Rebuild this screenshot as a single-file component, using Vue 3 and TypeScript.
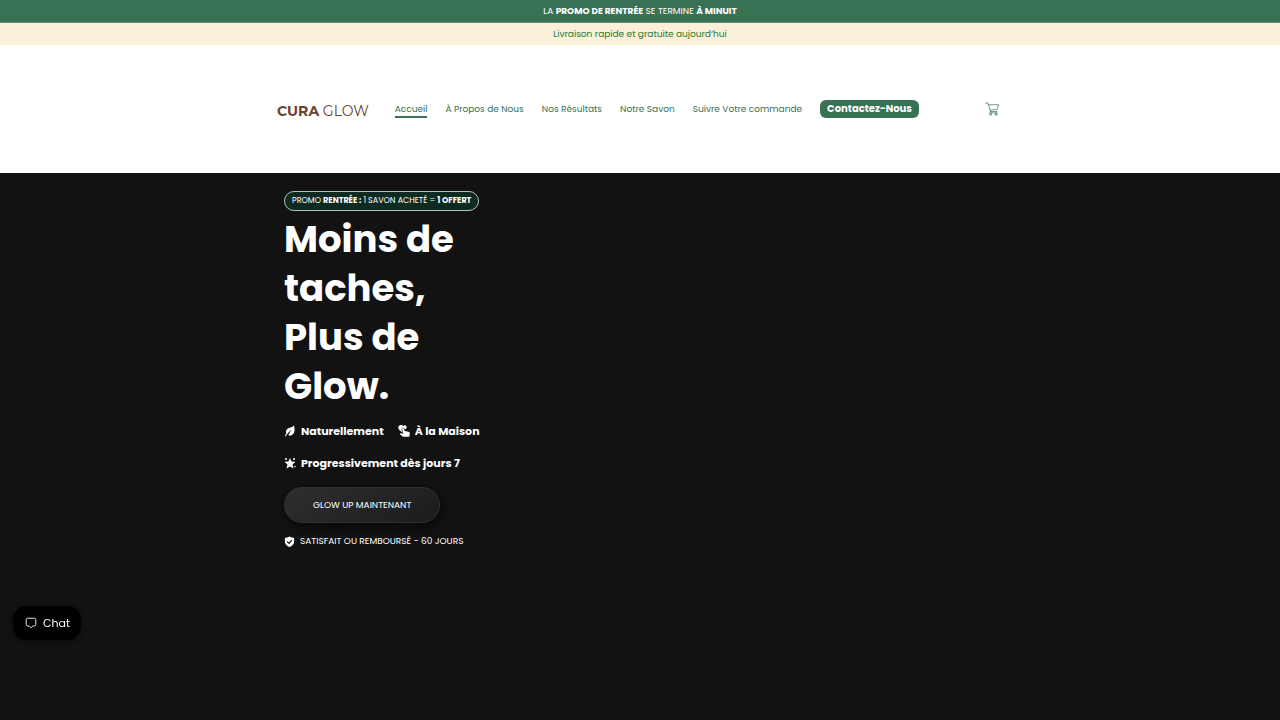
<script setup lang="ts">
interface NavLink {
  label: string
  active?: boolean
}

const links: NavLink[] = [
  { label: 'Accueil', active: true },
  { label: 'À Propos de Nous' },
  { label: 'Nos Résultats' },
  { label: 'Notre Savon' },
  { label: 'Suivre Votre commande' },
]
</script>

<template>
  <div class="page">
    <div class="bar bar-promo">
      <p>LA <strong>PROMO DE RENTRÉE</strong> SE TERMINE <strong>À MINUIT</strong></p>
    </div>
    <div class="bar bar-shipping"><p>Livraison rapide et gratuite aujourd’hui</p></div>

    <header class="header">
      <div class="header-inner">
        <a class="logo" href="#"><b>CURA</b> GLOW</a>
        <nav class="nav">
          <a v-for="link in links" :key="link.label" href="#" :class="{ active: link.active }">{{ link.label }}</a>
          <a class="contact" href="#">Contactez-Nous</a>
        </nav>
        <a class="cart" href="#" aria-label="Panier">
          <svg viewBox="0 0 28 28" fill="none" stroke="currentColor" stroke-width="1.4" stroke-linejoin="round" stroke-linecap="round">
            <path d="M1 2h5l5 17h13M7 5.500h20l-3 9.500-14 1" />
            <path d="M11 19c-2 0-2 2.500 0 2.500h13" />
            <circle cx="11" cy="24.500" r="2" />
            <circle cx="22" cy="24.500" r="2" />
          </svg>
        </a>
      </div>
    </header>

    <main class="hero">
      <div class="hero-inner">
        <div class="hero-content">
          <p class="badge">PROMO <strong>RENTRÉE :</strong> 1 SAVON ACHETÉ = <strong>1 OFFERT</strong></p>
          <h1>Moins de taches, Plus de Glow.</h1>
          <ul class="benefits">
            <li>
              <svg viewBox="0 0 24 24" fill="currentColor">
                <path d="M20 1C22 9 22 16 16.500 19.500c-2.500 2-5.500 2-8 1L15 9.500 5.500 18C2.500 14 4 9 8.500 6.500 12.500 4.500 17 4.500 20 1Z" />
                <path d="M2 22.500c.5-3.500 2.500-6 5-8.500l2 1.500c-3 2-4 4-5 7Z" />
              </svg>
              <span>Naturellement</span>
            </li>
            <li>
              <svg viewBox="0 0 24 24" fill="currentColor">
                <path d="M6 0c2 0 3.500.5 4.500 2 2-2 5.500-2 6.500.5 1 2.500 0 4.500-2 6L13 7.500C12.500 5 8 4.500 7 8c-.3 1 0 2 .5 3.500L9 15C4 12 0 8 .5 4.500 1 2 3 0 6 0Z" />
                <path d="M8 8c0-2.500 3.500-2.500 4.200 0l1.300 4 7.500 1.500c2 .5 3 2 2.500 4l-1 6H10l-5.500-4.500c-1.500-1.500.5-3 2-2.500l4 1Z" />
              </svg>
              <span>À la Maison</span>
            </li>
            <li>
              <svg viewBox="0 0 24 24" fill="currentColor">
                <path d="m12 2 3 7 8 .5-6 5.500 2 8-7-4-7 4 2-8-6-5.500L9 9Z" />
                <circle cx="4" cy="4" r="2" />
                <circle cx="20" cy="4" r="2" />
                <circle cx="22" cy="19" r="1.500" />
              </svg>
              <span>Progressivement dès jours 7</span>
            </li>
          </ul>
          <button class="cta" type="button">GLOW UP MAINTENANT</button>
          <p class="guarantee">
            <svg viewBox="0 0 24 24">
              <path d="M12 1c3 2 6 3 10 3v9c0 5-5 9-10 11C7 22 2 18 2 13V4c4 0 7-1 10-3Z" fill="currentColor" />
              <path d="m7 12 4 4 6-7" fill="none" stroke="#121212" stroke-width="2.800" />
            </svg>
            <span>SATISFAIT OU REMBOURSÉ - 60 JOURS</span>
          </p>
        </div>
      </div>
    </main>

    <button class="chat" type="button">
      <svg viewBox="0 0 20 20" fill="none" stroke="currentColor" stroke-width="1.500" stroke-linejoin="round">
        <path d="M4.500 2h11A2.500 2.500 0 0 1 18 4.500v8a2.500 2.500 0 0 1-2.500 2.500H13l-3 3-3-3H4.500A2.500 2.500 0 0 1 2 12.500v-8A2.500 2.500 0 0 1 4.500 2Z" />
      </svg>
      <span>Chat</span>
    </button>
  </div>
</template>

<style>
body {
  margin: 0;
  background: #121212;
}
</style>

<style scoped>
.page {
  display: flex;
  flex-direction: column;
  min-height: 100vh;
  font-family: Poppins, Inter, "Open Sans", sans-serif;
  color: #fff;
}
p, h1, ul {
  margin: 0;
  padding: 0;
}
a {
  color: inherit;
  text-decoration: none;
}
svg {
  flex: none;
  display: block;
}
.bar {
  font-size: 9px;
  line-height: 22px;
  text-align: center;
}
.bar-promo {
  background: #387154;
  border-bottom: 1px solid #6d8f70;
}
.bar-shipping {
  background: #fbf0d8;
  color: #237a39;
}
.header {
  background: #fff;
  color: #387154;
  padding: 48px 24px;
}
.header-inner {
  display: flex;
  align-items: center;
  max-width: 726px;
  min-height: 32px;
  margin: 0 auto;
}
.logo {
  font-family: Montserrat, Lato, sans-serif;
  font-size: 14px;
  line-height: 20px;
  color: #6b4131;
  white-space: nowrap;
  padding-top: 4px;
  margin-right: 26px;
}
.nav {
  display: flex;
  align-items: center;
  gap: 18px;
  font-size: 9px;
  line-height: 14px;
  white-space: nowrap;
}
.nav .active {
  border-bottom: 2px solid #387154;
  margin-bottom: -2px;
}
.nav .contact {
  background: #387154;
  color: #fff;
  border-radius: 6px;
  padding: 2px 7px;
  font-size: 10px;
  font-weight: 700;
}
.cart {
  margin-left: auto;
  padding-right: 4px;
}
.cart svg {
  width: 14px;
  height: 14px;
}
.hero {
  flex: 1;
  background: #121212;
  padding: 18px 24px;
}
.hero-inner {
  max-width: 712px;
  margin: 0 auto;
}
.hero-content {
  display: flex;
  flex-direction: column;
  align-items: flex-start;
  width: 200px;
}
.badge {
  border: 1px solid #b3c4bc;
  border-radius: 10px;
  background: #0f2b21;
  padding: 0 7px;
  font-size: 8px;
  line-height: 18px;
  white-space: nowrap;
}
h1 {
  margin-top: 4px;
  font-size: 37px;
  line-height: 49px;
  font-weight: 700;
}
.benefits {
  display: flex;
  flex-wrap: wrap;
  gap: 16px 14px;
  list-style: none;
  margin-top: 12px;
  font-size: 11px;
  line-height: 16px;
  font-weight: 700;
  white-space: nowrap;
}
.benefits li {
  display: flex;
  align-items: center;
  gap: 5px;
}
.benefits svg {
  width: 12px;
  height: 12px;
}
.cta {
  margin-top: 16px;
  border: 1px solid #303030;
  border-radius: 18px;
  background: linear-gradient(145deg, #2e2e2e, #1c1c1c);
  box-shadow: 2px 3px 8px #080808;
  color: #fff;
  font: inherit;
  font-size: 9px;
  line-height: 34px;
  padding: 0 28px;
  white-space: nowrap;
}
.guarantee {
  display: flex;
  align-items: center;
  gap: 5px;
  margin-top: 10px;
  font-size: 9px;
  line-height: 16px;
  white-space: nowrap;
}
.guarantee svg {
  width: 11px;
  height: 11px;
}
.chat {
  position: fixed;
  left: 13px;
  bottom: 80px;
  display: flex;
  align-items: center;
  gap: 6px;
  border: 0;
  border-radius: 14px;
  background: #000;
  box-shadow: 0 1px 4px #080808;
  color: #fff;
  font: inherit;
  font-size: 11px;
  line-height: 18px;
  padding: 8px 11px 8px 12px;
}
.chat svg {
  width: 12px;
  height: 12px;
}
</style>
